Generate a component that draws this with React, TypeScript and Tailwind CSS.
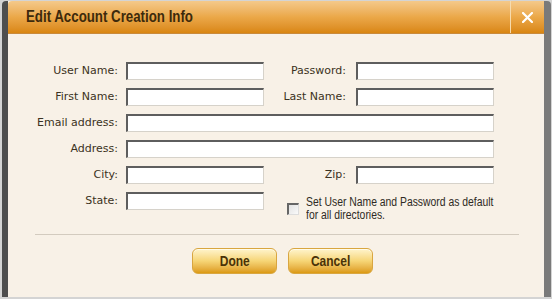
const inputCls =
  "h-[18px] bg-white border-t-2 border-l-2 border-r border-b border-t-[#5e5e5e] border-l-[#5e5e5e] border-r-[#d6d2ca] border-b-[#d6d2ca]";
const labelCls = "flex items-center justify-end text-[11px] text-[#3b3222] whitespace-nowrap";

const arial = { fontFamily: '"Liberation Sans", Arial, sans-serif' };

const Btn = ({ label }: { label: string }) => (
  <button
    className="w-[85px] h-[26px] rounded-[6px] border border-[#d9a640] bg-gradient-to-b from-[#fff4cc] via-[#f6d575] to-[#dc9a0c] shadow-[inset_0_1px_0_#fffbe8] flex items-center justify-center"
    style={arial}
  >
    <span className="inline-block scale-x-[0.8] text-[15px] font-bold text-[#4a3208]">{label}</span>
  </button>
);

export default function App() {
  return (
    <div className="w-[552px] h-[299px] bg-[#d4d4d4] pt-px pl-[2px] pr-px pb-[2px]" style={{ fontFamily: '"DejaVu Sans", Verdana, sans-serif' }}>
      <div className="h-full flex flex-col bg-[#f8f1e7] border-l-[6px] border-l-[#4e4e4e] border-r-[7px] border-r-[#7a7a7a] rounded-t-[4px] overflow-hidden">
        {/* title bar */}
        <div className="h-[33px] flex bg-gradient-to-b from-[#f4c98a] via-[#eba848] to-[#d9860f] border-b border-b-[#c98a3c] rounded-tl-[4px]">
          <div className="flex-1 flex items-center pl-[18px]" style={arial}>
            <span className="inline-block origin-left scale-x-[0.83] text-[16px] font-bold text-[#3d2a0c] whitespace-nowrap">
              Edit Account Creation Info
            </span>
          </div>
          <div className="w-[34px] border-l border-l-[#f6dbae] flex items-center justify-center">
            <svg width="11" height="11" viewBox="0 0 11 11">
              <path d="M1 1 L10 10 M10 1 L1 10" stroke="#fff" strokeWidth="2.2" strokeLinecap="round" />
            </svg>
          </div>
        </div>

        {/* form */}
        <div className="pt-[28px] grid grid-cols-[118px_138px_92px_138px] auto-rows-[18px] gap-y-[8px]">
          <div className={`${labelCls} pr-[8px]`}>User Name:</div>
          <div className={inputCls} />
          <div className={`${labelCls} pr-[10px]`}>Password:</div>
          <div className={inputCls} />

          <div className={`${labelCls} pr-[8px]`}>First Name:</div>
          <div className={inputCls} />
          <div className={`${labelCls} pr-[10px]`}>Last Name:</div>
          <div className={inputCls} />

          <div className={`${labelCls} pr-[8px]`}>Email address:</div>
          <div className={`${inputCls} col-span-3`} />

          <div className={`${labelCls} pr-[8px]`}>Address:</div>
          <div className={`${inputCls} col-span-3`} />

          <div className={`${labelCls} pr-[8px]`}>City:</div>
          <div className={inputCls} />
          <div className={`${labelCls} pr-[10px]`}>Zip:</div>
          <div className={inputCls} />

          <div className={`${labelCls} pr-[8px]`}>State:</div>
          <div className={inputCls} />
          <div className="col-span-2 flex items-start pl-[23px] pt-[4px] h-[31px]">
            <div className="mt-[7px] w-[12px] h-[12px] shrink-0 border-t-2 border-l-2 border-r border-b border-t-[#666] border-l-[#666] border-r-[#ddd] border-b-[#ddd] bg-gradient-to-br from-[#e2e2e2] to-[#fafafa]" />
            <div
              className="ml-[7px] origin-left scale-x-[0.83] whitespace-nowrap text-[12.5px] leading-[13px] text-[#2e2a24]"
              style={arial}
            >
              Set User Name and Password as default
              <br />
              for all directories.
            </div>
          </div>
        </div>

        <div className="mt-[24px] ml-[27px] w-[484px] h-px bg-[#d3cbbf]" />

        <div className="mt-[13px] flex gap-[11px] pl-[184px]">
          <Btn label="Done" />
          <Btn label="Cancel" />
        </div>
      </div>
    </div>
  );
}
